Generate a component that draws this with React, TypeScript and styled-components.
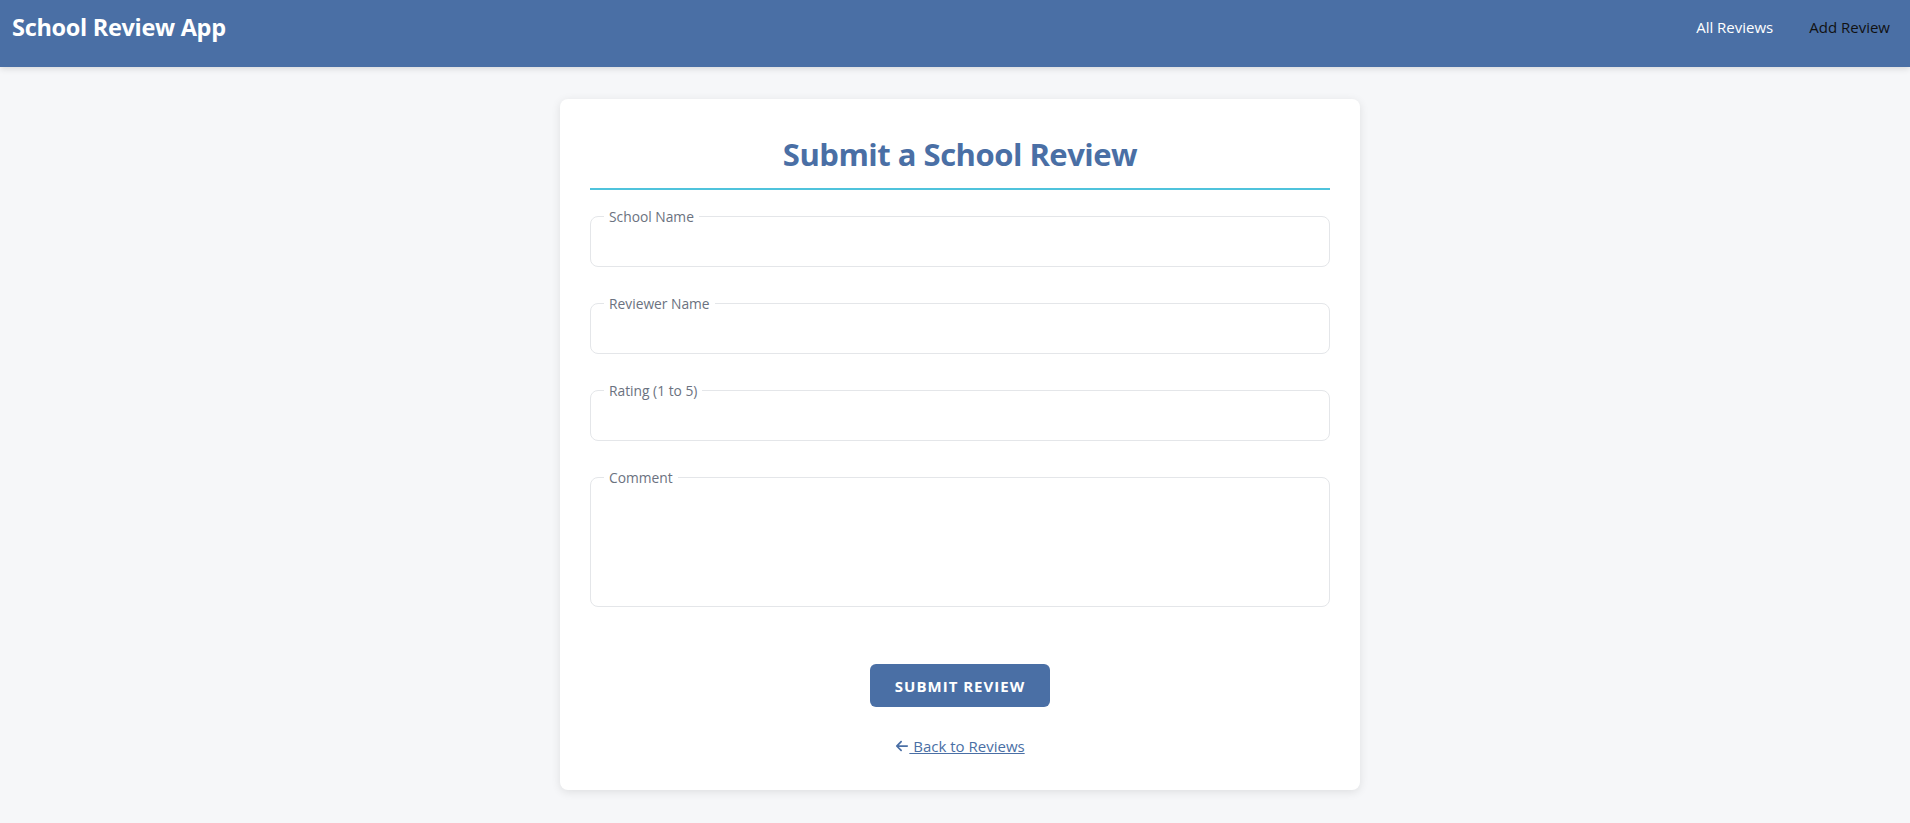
import styled, { createGlobalStyle } from 'styled-components'

const GlobalStyle = createGlobalStyle`
  body {
    margin: 0;
    background: #f6f7f9;
    font-family: "Open Sans", "Noto Sans", sans-serif;
    color: #333;
  }
`

const Header = styled.header`
  box-sizing: border-box;
  height: 67px;
  padding: 10px 20px 0 12px;
  background: #4a6fa5;
  display: flex;
  align-items: flex-start;
  justify-content: space-between;
  box-shadow: 0 2px 6px rgba(0, 0, 0, 0.12);
`

const Brand = styled.div`
  color: #fff;
  font-size: 23.5px;
  font-weight: 700;
  line-height: 34px;
  letter-spacing: -0.3px;
`

const Nav = styled.nav`
  display: flex;
  gap: 36px;
  padding-top: 6px;
`

const NavLink = styled.a<{ $active?: boolean }>`
  color: ${p => (p.$active ? '#111' : '#fff')};
  font-size: 15px;
  line-height: 22px;
  text-decoration: none;
  cursor: pointer;
`

const Main = styled.main`
  padding: 32px 0 40px 10px;
`

const Card = styled.div`
  box-sizing: border-box;
  width: 800px;
  margin: 0 auto;
  padding: 30px 30px 34px;
  background: #fff;
  border-radius: 8px;
  box-shadow: 0 2px 10px rgba(0, 0, 0, 0.1);
`

const Title = styled.h2`
  margin: 6px 0 18px;
  padding-bottom: 15px;
  border-bottom: 2px solid #4fc3dc;
  text-align: center;
  color: #4a6fa5;
  font-size: 31px;
  line-height: 38px;
  font-weight: 700;
  letter-spacing: -0.5px;
`

const Field = styled.fieldset`
  margin: 0 0 28px;
  padding: 0 13px;
  border: 1px solid #e4e6e9;
  border-radius: 8px;
`

const Legend = styled.legend`
  padding: 0 5px;
  color: #6b7280;
  font-size: 13.8px;
  line-height: 17px;
`

const Input = styled.input`
  display: block;
  box-sizing: border-box;
  width: 100%;
  height: 41px;
  border: none;
  outline: none;
  background: transparent;
  font: inherit;
`

const TextArea = styled.textarea`
  display: block;
  box-sizing: border-box;
  width: 100%;
  height: 120px;
  border: none;
  outline: none;
  resize: none;
  background: transparent;
  font: inherit;
`

const Actions = styled.div`
  display: flex;
  flex-direction: column;
  align-items: center;
  margin-top: 57px;
  gap: 29px;
`

const SubmitButton = styled.button`
  height: 43px;
  padding: 0 25px;
  border: none;
  border-radius: 6px;
  background: #4a6fa5;
  color: #fff;
  font-family: inherit;
  font-size: 15px;
  font-weight: 700;
  letter-spacing: 1px;
  cursor: pointer;
`

const BackLink = styled.a`
  color: #4a6fa5;
  font-size: 15px;
  line-height: 20px;
  text-decoration: underline;
  cursor: pointer;
  display: inline-flex;
  align-items: center;
`

const Arrow = () => (
  <svg width="14" height="14" viewBox="0 0 448 512" fill="#4a6fa5" style={{ marginBottom: 1 }}>
    <path d="M9.4 233.4c-12.5 12.5-12.5 32.8 0 45.3l160 160c12.5 12.5 32.8 12.5 45.3 0s12.5-32.8 0-45.3L109.2 288 416 288c17.7 0 32-14.3 32-32s-14.3-32-32-32l-306.7 0L214.6 118.6c12.5-12.5 12.5-32.8 0-45.3s-32.8-12.5-45.3 0l-160 160z" />
  </svg>
)

const fields = ['School Name', 'Reviewer Name', 'Rating (1 to 5)']

export default function App() {
  return (
    <>
      <GlobalStyle />
      <Header>
        <Brand>School Review App</Brand>
        <Nav>
          <NavLink>All Reviews</NavLink>
          <NavLink $active>Add Review</NavLink>
        </Nav>
      </Header>
      <Main>
        <Card>
          <Title>Submit a School Review</Title>
          <form onSubmit={e => e.preventDefault()}>
            {fields.map(label => (
              <Field key={label}>
                <Legend>{label}</Legend>
                <Input />
              </Field>
            ))}
            <Field>
              <Legend>Comment</Legend>
              <TextArea />
            </Field>
            <Actions>
              <SubmitButton type="submit">SUBMIT REVIEW</SubmitButton>
              <BackLink>
                <Arrow />
                <span>&nbsp;Back to Reviews</span>
              </BackLink>
            </Actions>
          </form>
        </Card>
      </Main>
    </>
  )
}
